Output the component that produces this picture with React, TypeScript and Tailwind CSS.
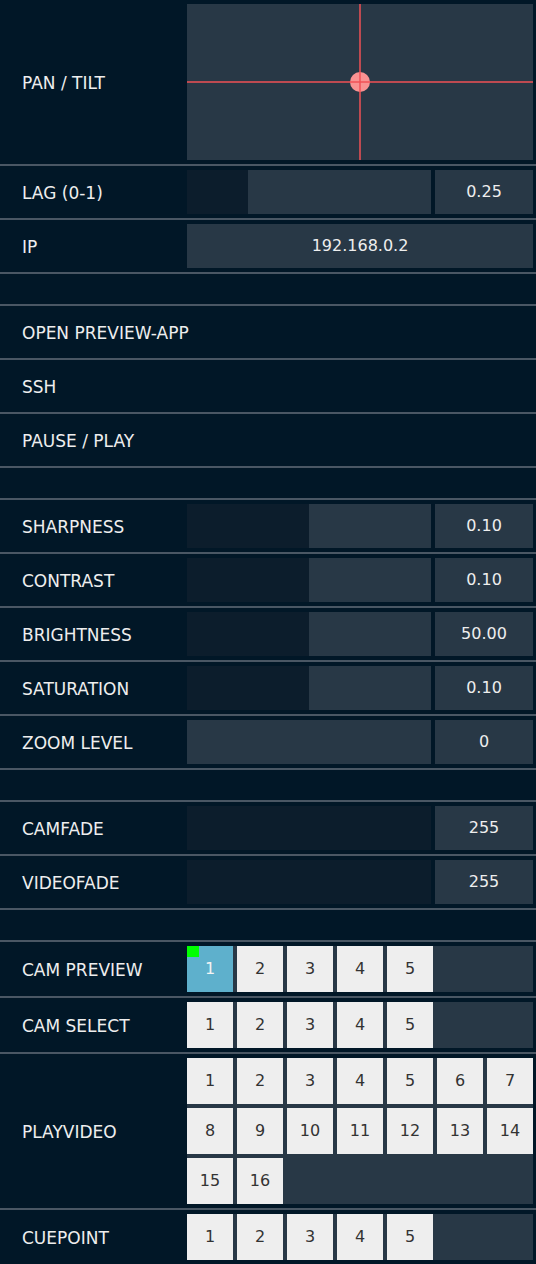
import React from "react";

const FONT = "font-['DejaVu_Sans','Verdana',sans-serif]";

function Row({ label, children, last }: { label: string; children?: React.ReactNode; last?: boolean }) {
  return (
    <div className={`flex py-1 ${last ? "" : "border-b-2 border-[#4a5764]"}`}>
      <div className="w-[187px] pl-[22px] flex items-center whitespace-nowrap text-[17px] text-[#eeeeee] pt-[4px]">{label}</div>
      <div className="w-[346px]">{children}</div>
    </div>
  );
}

function Spacer() {
  return <div className="h-[32px] border-b-2 border-[#4a5764]" />;
}

function Slider({ dark, value }: { dark: string; value: string }) {
  return (
    <div className="flex h-[44px] gap-1">
      <div className="w-[244px] flex bg-[#283846]">
        <div className={`${dark} h-full bg-[#0c1d2c]`} />
      </div>
      <div className="w-[98px] bg-[#283846] flex items-center justify-center text-[16px] text-[#eeeeee]">{value}</div>
    </div>
  );
}

function Plain({ children }: { children?: React.ReactNode }) {
  return <div className="h-[44px]">{children}</div>;
}

function Buttons({ n, active }: { n: number; active?: number }) {
  const items = Array.from({ length: n }, (_, i) => i + 1);
  return (
    <div className="flex flex-wrap gap-1 bg-[#283846]">
      {items.map((i) =>
        i === active ? (
          <div key={i} className="relative w-[46px] h-[46px] bg-[#5eb0cc] text-[#f4f4f4] flex items-center justify-center text-[16px]">
            <div className="absolute left-0 top-0 w-[12px] h-[11px] bg-[#00ff00]" />
            {i}
          </div>
        ) : (
          <div key={i} className="w-[46px] h-[46px] bg-[#eeeeee] text-[#333333] flex items-center justify-center text-[16px]">
            {i}
          </div>
        )
      )}
    </div>
  );
}

export default function App() {
  return (
    <div className={`w-[536px] h-[1264px] overflow-hidden bg-[#011727] ${FONT}`}>
      <Row label="PAN / TILT">
        <div className="relative h-[156px] bg-[#283846] overflow-hidden">
          <div className="absolute left-[172px] top-0 w-[2px] h-full bg-[rgba(240,80,85,0.75)] z-10" />
          <div className="absolute top-[77px] left-0 h-[2px] w-full bg-[rgba(240,80,85,0.75)] z-10" />
          <div className="absolute left-[163px] top-[68px] w-[20px] h-[20px] rounded-full bg-[#f99292]" />
        </div>
      </Row>
      <Row label="LAG (0-1)">
        <Slider dark="w-[61px]" value="0.25" />
      </Row>
      <Row label="IP">
        <div className="h-[44px] bg-[#283846] flex items-center justify-center text-[16px] text-[#eeeeee]">192.168.0.2</div>
      </Row>
      <Spacer />
      <Row label="OPEN PREVIEW-APP">
        <Plain />
      </Row>
      <Row label="SSH">
        <Plain />
      </Row>
      <Row label="PAUSE / PLAY">
        <Plain />
      </Row>
      <Spacer />
      <Row label="SHARPNESS">
        <Slider dark="w-[122px]" value="0.10" />
      </Row>
      <Row label="CONTRAST">
        <Slider dark="w-[122px]" value="0.10" />
      </Row>
      <Row label="BRIGHTNESS">
        <Slider dark="w-[122px]" value="50.00" />
      </Row>
      <Row label="SATURATION">
        <Slider dark="w-[122px]" value="0.10" />
      </Row>
      <Row label="ZOOM LEVEL">
        <Slider dark="w-0" value="0" />
      </Row>
      <Spacer />
      <Row label="CAMFADE">
        <Slider dark="w-full" value="255" />
      </Row>
      <Row label="VIDEOFADE">
        <Slider dark="w-full" value="255" />
      </Row>
      <Spacer />
      <Row label="CAM PREVIEW">
        <Buttons n={5} active={1} />
      </Row>
      <Row label="CAM SELECT">
        <Buttons n={5} />
      </Row>
      <Row label="PLAYVIDEO">
        <Buttons n={16} />
      </Row>
      <Row label="CUEPOINT" last>
        <Buttons n={5} />
      </Row>
    </div>
  );
}
